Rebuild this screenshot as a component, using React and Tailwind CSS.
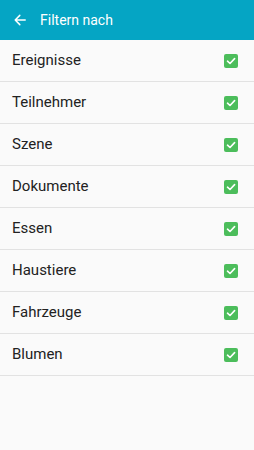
const items = [
  "Ereignisse",
  "Teilnehmer",
  "Szene",
  "Dokumente",
  "Essen",
  "Haustiere",
  "Fahrzeuge",
  "Blumen",
];

function Check() {
  return (
    <div className="w-[14px] h-[14px] rounded-[2px] bg-[#4cbd5b] flex items-center justify-center">
      <svg width="10" height="10" viewBox="0 0 10 10" fill="none">
        <path d="M1.5 5.2 L4 7.5 L8.6 2.6" stroke="white" strokeWidth="1.6" strokeLinecap="round" strokeLinejoin="round" />
      </svg>
    </div>
  );
}

export default function App() {
  return (
    <div className="w-[254px] h-[450px] bg-[#fafafa] font-['Roboto',sans-serif]">
      <div className="h-[40px] bg-[#05a5c4] flex items-center text-white">
        <svg className="ml-[14px]" width="12" height="12" viewBox="0 0 12 12" fill="none">
          <path d="M11.2 6 H1.2 M5.8 1.4 L1.2 6 L5.8 10.6" stroke="white" strokeWidth="1.5" strokeLinecap="round" strokeLinejoin="round" />
        </svg>
        <span className="ml-[14px] text-[14px]">Filtern nach</span>
      </div>
      <ul>
        {items.map((item) => (
          <li
            key={item}
            className="h-[42px] border-b border-[#e2e2e2] flex items-center justify-between pl-[12px] pr-[16px]"
          >
            <span className="text-[15px] text-[#222]">{item}</span>
            <Check />
          </li>
        ))}
      </ul>
    </div>
  );
}
